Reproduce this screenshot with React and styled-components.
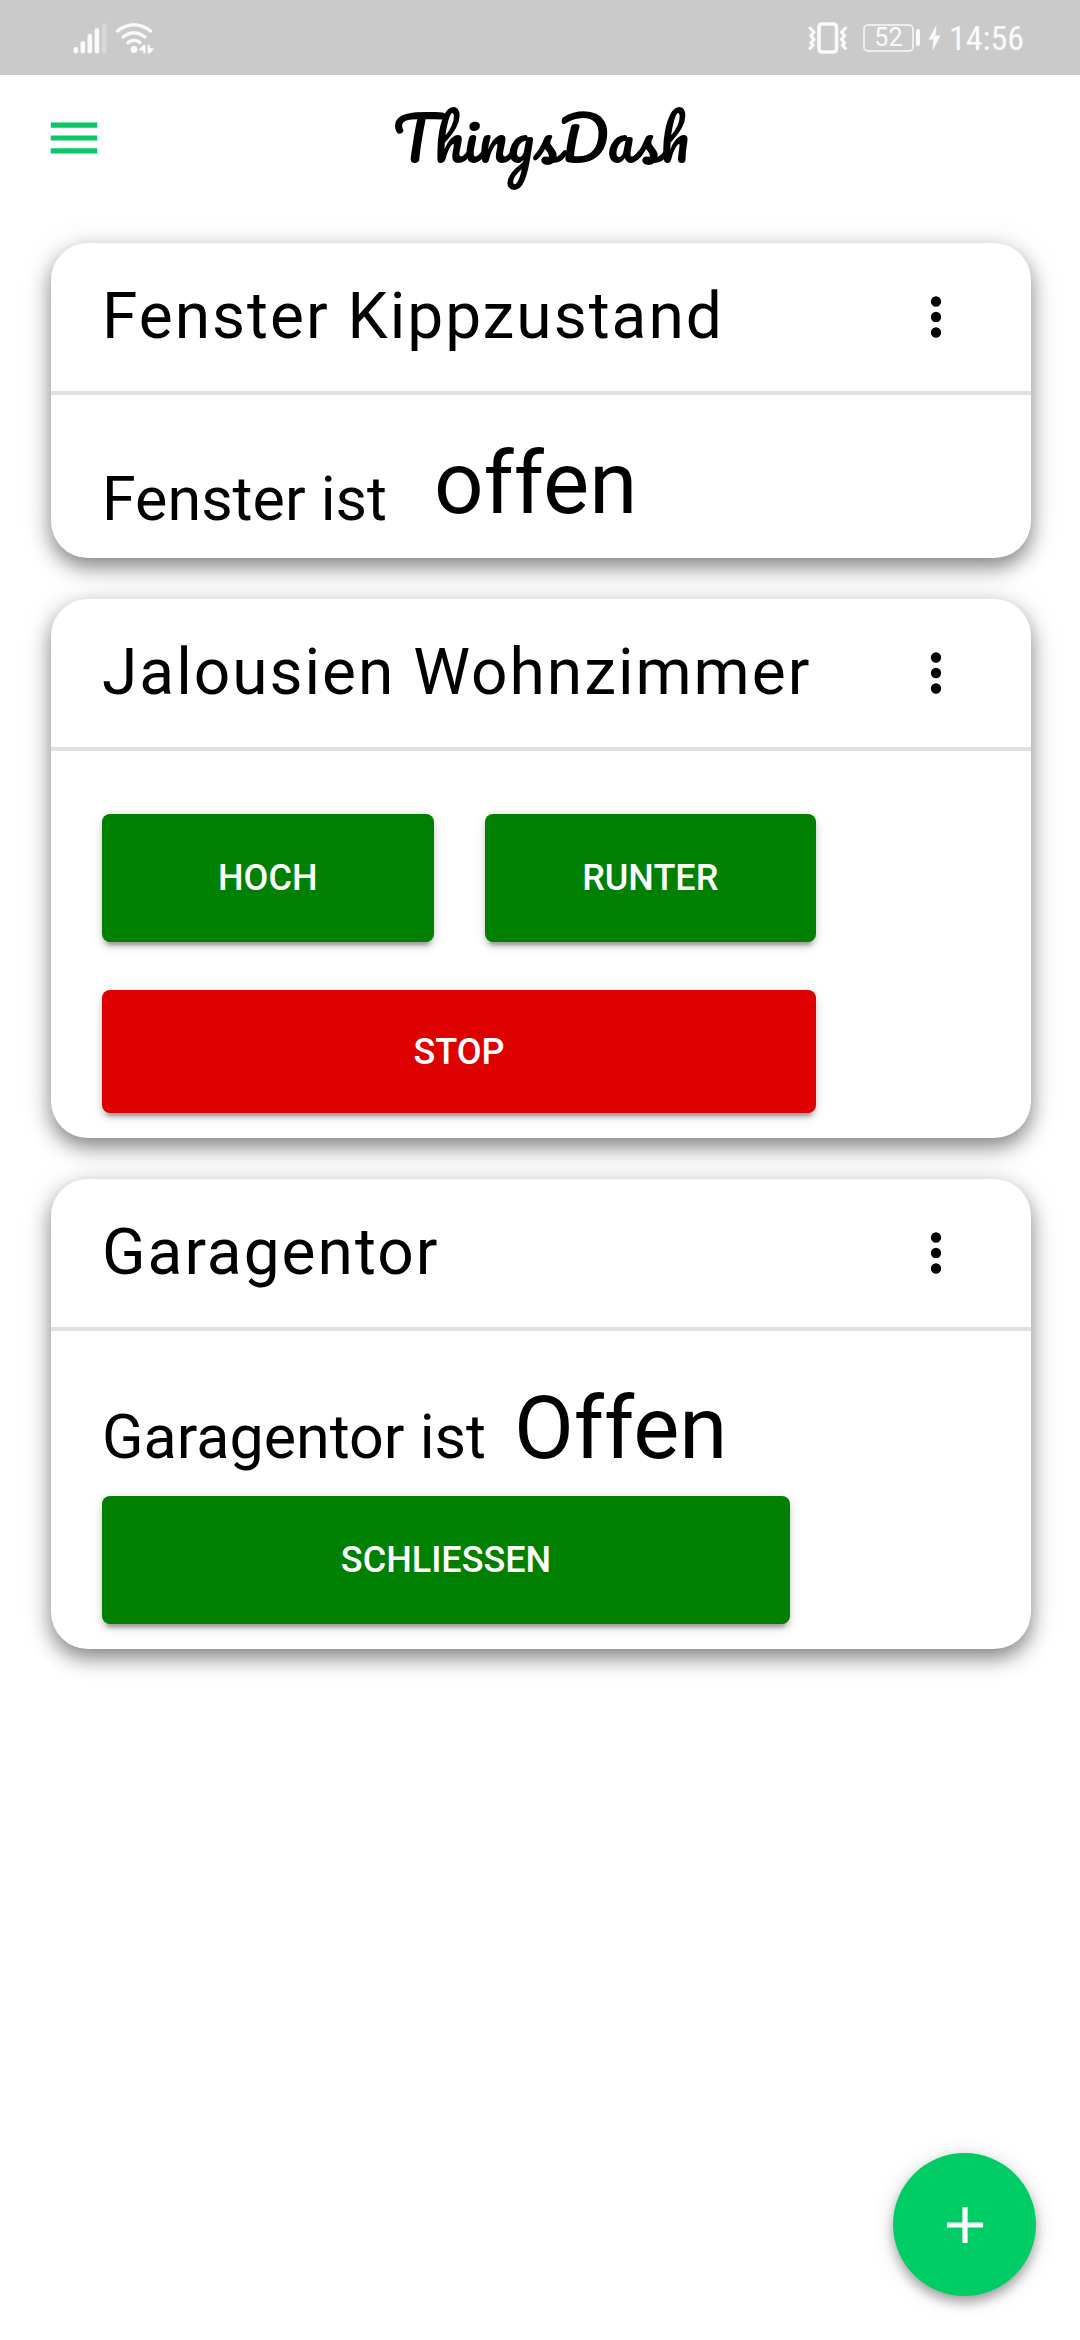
import React from "react";
import styled, { createGlobalStyle } from "styled-components";

const GlobalStyle = createGlobalStyle`
  *, *::before, *::after { box-sizing: border-box; }
  body {
    margin: 0;
    background: #fff;
    color: #000;
    font-family: Roboto, "Liberation Sans", sans-serif;
  }
  button { font: inherit; border: 0; padding: 0; cursor: pointer; }
  h1, h2, p { margin: 0; font-weight: 400; }
`;

const Screen = styled.div`
  min-height: 100vh;
  display: flex;
  flex-direction: column;
`;

const StatusBar = styled.div`
  height: 75px;
  padding: 0 56px 0 73px;
  display: flex;
  align-items: center;
  justify-content: space-between;
  background: #cacaca;
  color: #fafafa;
`;

const StatusGroup = styled.div`
  display: flex;
  align-items: center;
  gap: ${(p) => p.$gap}px;
`;

const Battery = styled.span`
  width: 51px;
  height: 28px;
  border: 2px solid #eee;
  border-radius: 5px;
  display: flex;
  align-items: center;
  justify-content: center;
  font-size: 25px;
  line-height: 24px;
`;

const BatteryBox = styled.span`
  display: flex;
  align-items: center;
  gap: 2px;
`;

const BatteryTip = styled.span`
  width: 4px;
  height: 17px;
  border-radius: 2px;
  background: #fafafa;
`;

const Clock = styled.time`
  font-family: "Roboto Condensed", Roboto, sans-serif;
  font-size: 34px;
  line-height: 40px;
`;

const AppBar = styled.header`
  min-height: 126px;
  padding: 0 41px 0 43px;
  display: grid;
  grid-template-columns: 1fr auto 1fr;
  align-items: center;
`;

const IconButton = styled.button`
  width: 62px;
  height: 62px;
  display: flex;
  background: none;
  color: ${(p) => p.$color || "#000"};
`;

const Brand = styled.h1`
  font-family: Pacifico, Lato, cursive;
  font-size: 59px;
  line-height: 84px;
`;

const CardList = styled.main`
  padding: 42px 49px 41px 51px;
  display: flex;
  flex-direction: column;
  gap: 41px;
`;

const Card = styled.section`
  border-radius: 37px;
  background: #fff;
  box-shadow: 0 9px 20px rgba(0, 0, 0, 0.44), 0 4px 36px rgba(0, 0, 0, 0.1);
`;

const CardHeader = styled.div`
  height: 152px;
  padding: 0 64px 0 51px;
  display: flex;
  align-items: center;
  justify-content: space-between;
  border-bottom: 4px solid #e0e0e0;
`;

const CardTitle = styled.h2`
  font-size: 64px;
  line-height: 76px;
  letter-spacing: 2px;
`;

const CardBody = styled.div`
  padding: ${(p) => p.$top}px 51px 25px;
  display: flex;
  flex-direction: column;
  gap: ${(p) => p.$gap || 0}px;
`;

const State = styled.p`
  display: flex;
  align-items: ${(p) => p.$align};
  gap: ${(p) => p.$gap}px;
`;

const StateLabel = styled.span`
  font-size: 61px;
  line-height: 68px;
`;

const StateValue = styled.span`
  font-size: 87px;
  line-height: 100px;
`;

const Actions = styled.div`
  width: 100%;
  max-width: ${(p) => p.$width}px;
  display: grid;
  grid-auto-columns: 1fr;
  grid-auto-flow: column;
  gap: 51px;
`;

const ActionButton = styled.button`
  && {
    height: ${(p) => (p.$danger ? 123 : 128)}px;
    border-radius: 8px;
    background: ${(p) => (p.$danger ? "#de0000" : "#008000")};
    color: #fff;
    font-size: 36px;
    font-weight: 500;
    line-height: 40px;
    text-transform: uppercase;
    box-shadow: 0 8px 3px -5px rgba(0, 0, 0, 0.2),
      0 5px 5px 0 rgba(0, 0, 0, 0.14), 0 3px 13px 0 rgba(0, 0, 0, 0.12);
  }
`;

const AddButton = styled.button`
  position: fixed;
  right: 44px;
  bottom: 44px;
  width: 143px;
  height: 143px;
  border-radius: 50%;
  display: flex;
  align-items: center;
  justify-content: center;
  background: #00cc66;
  color: #fff;
  box-shadow: 0 8px 13px -3px rgba(0, 0, 0, 0.2),
    0 5px 13px 0 rgba(0, 0, 0, 0.2), 0 3px 26px 0 rgba(0, 0, 0, 0.12);
`;

const Glyph = ({ d }) => (
  <svg width="62" height="62" viewBox="0 0 24 24" fill="currentColor" aria-hidden="true">
    <path d={d} />
  </svg>
);

const MENU = "M3 6h18v2H3V6zm0 5h18v2H3v-2zm0 5h18v2H3v-2z";
const MORE =
  "M12 16a2 2 0 1 1 0 4 2 2 0 0 1 0-4m0-6a2 2 0 1 1 0 4 2 2 0 0 1 0-4m0-6a2 2 0 1 1 0 4 2 2 0 0 1 0-4z";
const PLUS = "M19 13h-6v6h-2v-6H5v-2h6V5h2v6h6v2z";

const SignalIcon = () => (
  <svg width="34" height="32" viewBox="0 0 34 32" fill="#fafafa" aria-hidden="true">
    <rect x="0.5" y="25" width="4.6" height="6.5" rx="2.2" />
    <rect x="7.5" y="19" width="4.6" height="12.5" rx="2.2" />
    <rect x="14.5" y="12" width="4.6" height="19.5" rx="2.2" />
    <rect x="21.6" y="6" width="4.6" height="25.5" rx="2.2" />
    <rect x="29" y="1" width="4.6" height="30.5" rx="2.2" opacity="0.3" />
  </svg>
);

const WifiIcon = () => (
  <svg width="39" height="32" viewBox="0 0 39 32" fill="none" aria-hidden="true">
    <g stroke="#fafafa" strokeWidth="3.4" strokeLinecap="round">
      <path d="M2.5 9Q19 -3.4 35.5 9" />
      <path d="M8 15Q19 6.4 30 15" />
      <path d="M13 20.6Q19 16 25 20.6" />
    </g>
    <circle cx="19" cy="27.4" r="3.4" fill="#fafafa" />
    <path d="M30.5 23v8.600h-2.300v-3.200h-4v-1.200l4-4.200zM32.600 23h2.300v3.200h3.600v1.200l-3.600 4.200h-2.300z" fill="#fafafa" />
  </svg>
);

const VibrateIcon = () => (
  <svg width="40" height="32" viewBox="0 0 40 32" fill="none" stroke="#fafafa" aria-hidden="true">
    <rect x="11" y="2" width="17.5" height="28" rx="3" strokeWidth="3.6" />
    <g strokeWidth="3" strokeLinecap="round" strokeLinejoin="round">
      <path d="M2 6l4 4.200-3.200 3.600 3.200 3.600-3.200 3.600 2.400 2L2 26.400" />
      <path d="M37.500 6l-4 4.200 3.200 3.600-3.200 3.600 3.200 3.600-2.400 2 3.200 3.400" />
    </g>
  </svg>
);

const BoltIcon = () => (
  <svg width="13" height="26" viewBox="0 0 13 26" fill="#fafafa" aria-hidden="true">
    <path d="M8.500 0L0.500 14.500H5.300L4.500 26L12.500 10.500H7.500z" />
  </svg>
);

function Widget({ title, children, ...body }) {
  return (
    <Card>
      <CardHeader>
        <CardTitle>{title}</CardTitle>
        <IconButton type="button" aria-label={`Optionen ${title}`}>
          <Glyph d={MORE} />
        </IconButton>
      </CardHeader>
      <CardBody {...body}>{children}</CardBody>
    </Card>
  );
}

export default function App() {
  return (
    <Screen>
      <GlobalStyle />
      <StatusBar>
        <StatusGroup $gap={8}>
          <SignalIcon />
          <WifiIcon />
        </StatusGroup>
        <StatusGroup $gap={8}>
          <StatusGroup $gap={15}>
            <VibrateIcon />
            <BatteryBox>
              <Battery>52</Battery>
              <BatteryTip />
            </BatteryBox>
          </StatusGroup>
          <BoltIcon />
          <Clock>14:56</Clock>
        </StatusGroup>
      </StatusBar>
      <AppBar>
        <IconButton type="button" aria-label="Menü" $color="#09c966">
          <Glyph d={MENU} />
        </IconButton>
        <Brand>ThingsDash</Brand>
      </AppBar>
      <CardList>
        <Widget title="Fenster Kippzustand" $top={38}>
          <State $align="flex-end" $gap={47}>
            <StateLabel>Fenster ist</StateLabel>
            <StateValue>offen</StateValue>
          </State>
        </Widget>
        <Widget title="Jalousien Wohnzimmer" $top={63} $gap={48}>
          <Actions $width={714}>
            <ActionButton type="button">Hoch</ActionButton>
            <ActionButton type="button">Runter</ActionButton>
          </Actions>
          <Actions $width={714}>
            <ActionButton type="button" $danger>Stop</ActionButton>
          </Actions>
        </Widget>
        <Widget title="Garagentor" $top={47} $gap={18}>
          <State $align="baseline" $gap={28}>
            <StateLabel>Garagentor ist</StateLabel>
            <StateValue>Offen</StateValue>
          </State>
          <Actions $width={688}>
            <ActionButton type="button">Schliessen</ActionButton>
          </Actions>
        </Widget>
      </CardList>
      <AddButton type="button" aria-label="Hinzufügen">
        <Glyph d={PLUS} />
      </AddButton>
    </Screen>
  );
}
